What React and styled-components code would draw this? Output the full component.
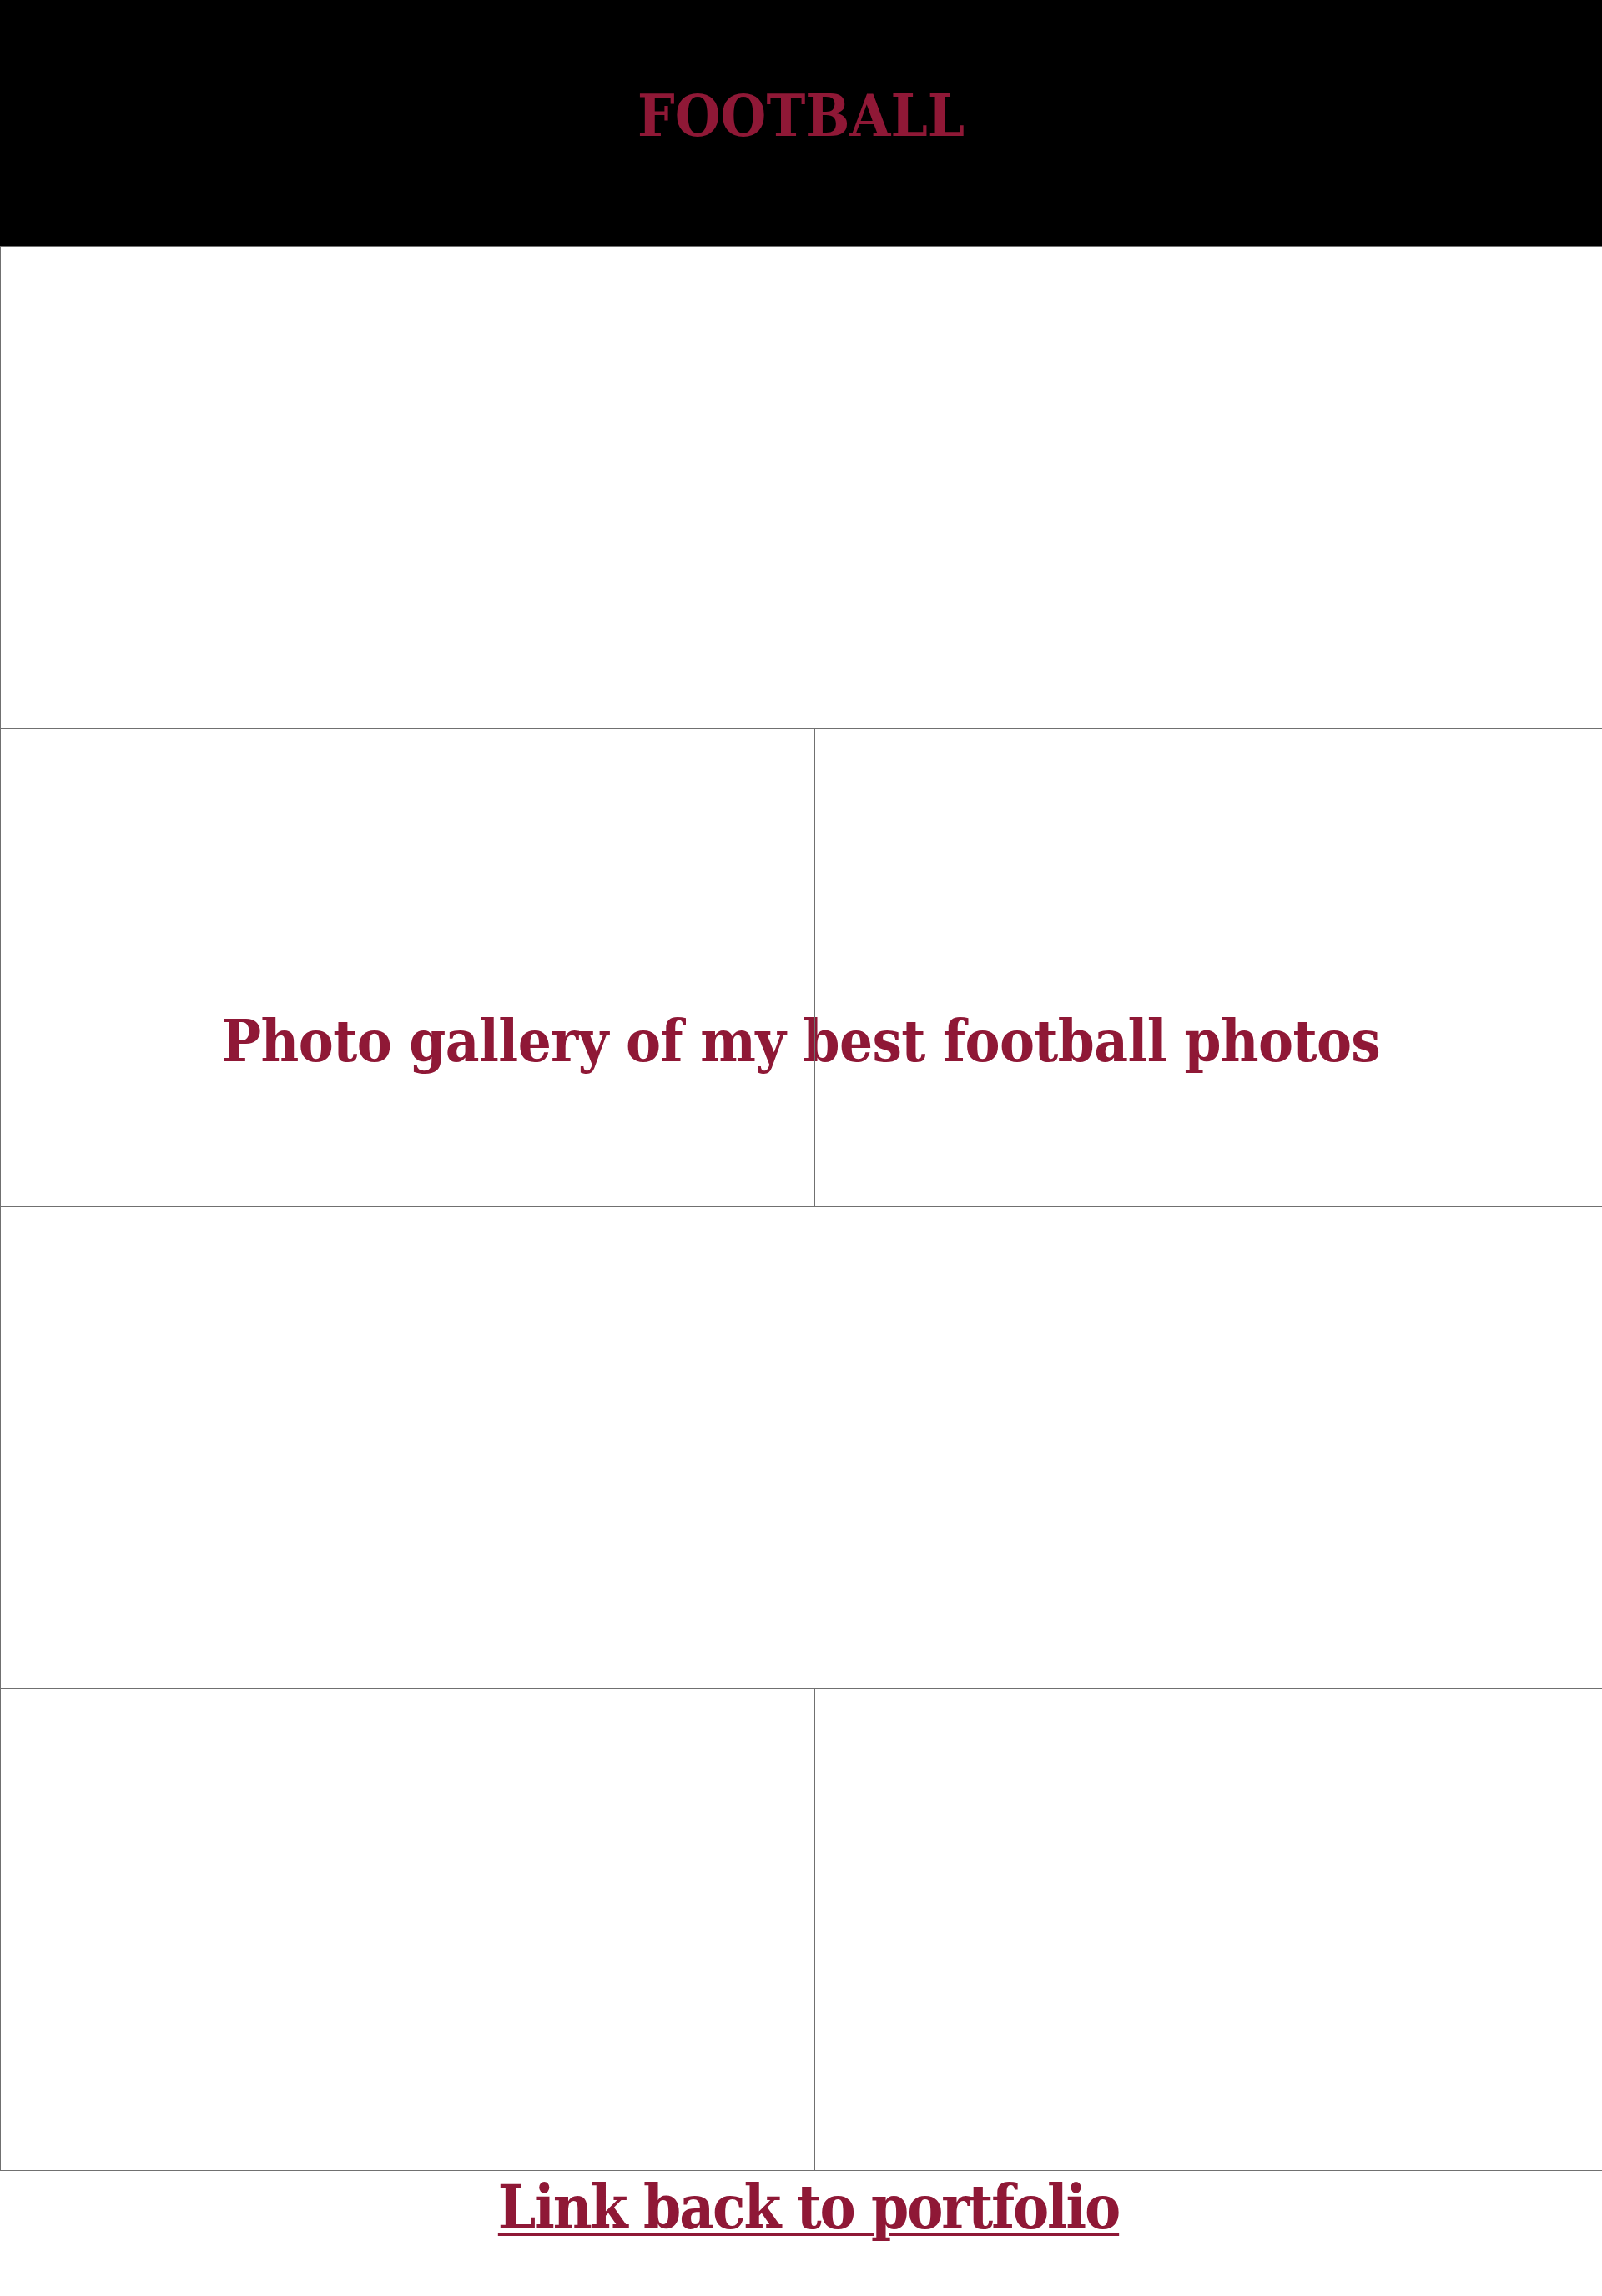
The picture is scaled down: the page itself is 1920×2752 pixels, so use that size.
import React from "react";
import styled, { createGlobalStyle } from "styled-components";

const GlobalStyle = createGlobalStyle`
  html, body {
    margin: 0;
    padding: 0;
    background: #ffffff;
    overflow-x: hidden;
  }
  body {
    font-family: "DejaVu Serif", "Liberation Serif", serif;
  }
`;

const CRIMSON = "#8f1836";
const LINE = "#707070";
const FONT = `"DejaVu Serif Condensed", "DejaVu Serif", "Liberation Serif", serif`;

const Page = styled.div`
  width: 1920px;
  min-height: 2752px;
  display: flex;
  flex-direction: column;
`;

const Header = styled.header`
  background: #000000;
  height: 295px;
  box-sizing: border-box;
  padding-top: 104px;
  display: flex;
  justify-content: center;
  align-items: flex-start;
`;

const Title = styled.h1`
  margin: 0;
  font-family: ${FONT};
  font-weight: bold;
  font-size: 70px;
  line-height: 1;
  color: ${CRIMSON};
  letter-spacing: 0px;
`;

const Gallery = styled.section`
  position: relative;
  z-index: 0;
  border-top: 1px solid ${LINE};
  display: flex;
  flex-direction: column;
`;

const Row = styled.div`
  display: grid;
  grid-template-columns: 975px 1fr;
  height: ${(p) => p.$height}px;
  border-bottom: ${(p) => p.$bottom}px solid ${LINE};
`;

const Cell = styled.div`
  border-left: ${(p) => p.$edge}px solid ${LINE};
`;

const Caption = styled.p`
  position: absolute;
  z-index: -1;
  left: 0;
  right: 0;
  top: 917px;
  margin: 0;
  text-align: center;
  font-family: ${FONT};
  font-weight: bold;
  font-size: 70px;
  line-height: 1;
  color: ${CRIMSON};
  letter-spacing: -0.6px;
  white-space: nowrap;
`;

const Footer = styled.div`
  display: flex;
  justify-content: center;
  padding-top: 8px;
  padding-left: 18px;
`;

const BackLink = styled.a`
  font-family: ${FONT};
  font-weight: bold;
  font-size: 72px;
  line-height: 1;
  color: ${CRIMSON};
  text-decoration: underline;
  text-decoration-thickness: 3px;
  text-underline-offset: 6px;
  letter-spacing: -2.1px;
`;

const rows = [
  { height: 576, bottom: 2, divider: 1 },
  { height: 572, bottom: 1, divider: 2 },
  { height: 576, bottom: 2, divider: 1 },
  { height: 576, bottom: 1, divider: 2 },
];

export default function App() {
  return (
    <>
      <GlobalStyle />
      <Page>
        <Header>
          <Title>FOOTBALL</Title>
        </Header>
        <Gallery>
          {rows.map((r, i) => (
            <Row key={i} $height={r.height} $bottom={r.bottom}>
              <Cell $edge={1} />
              <Cell $edge={r.divider} />
            </Row>
          ))}
          <Caption>Photo gallery of my best football photos</Caption>
        </Gallery>
        <Footer>
          <BackLink href="#">Link back to portfolio</BackLink>
        </Footer>
      </Page>
    </>
  );
}
